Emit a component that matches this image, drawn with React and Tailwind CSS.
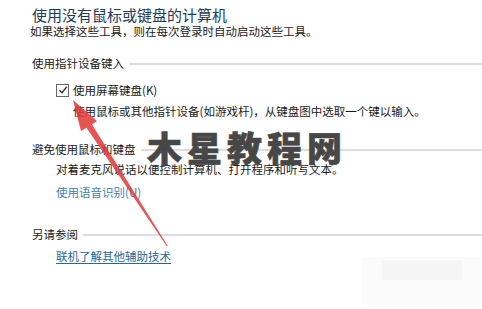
const font = { fontFamily: '"Noto Sans CJK SC", "Noto Sans", sans-serif' };

const SectionHeader = ({ children, className = '' }) => (
  <div className={`flex items-center gap-[5px] text-[11.5px] leading-[14px] text-[#1a1a1a] ${className}`}>
    <span className="shrink-0">{children}</span>
    <div className="mt-[1px] h-[2px] flex-1 bg-[#dddddd]" />
  </div>
);

export default function App() {
  return (
    <div
      className="relative h-[309px] w-[482px] overflow-hidden bg-white pl-[32px] pt-[6px]"
      style={font}
    >
      <h1 className="text-[15px] leading-[18px] text-[#243b57]">使用没有鼠标或键盘的计算机</h1>
      <p className="-ml-[2px] text-[11.5px] leading-[14px] text-[#1a1a1a]">
        如果选择这些工具，则在每次登录时自动启动这些工具。
      </p>

      <SectionHeader className="mt-[18px]">使用指针设备键入</SectionHeader>
      <label className="mt-[13px] flex items-center gap-[4px] pl-[24px] text-[11.5px] leading-[14px] text-[#1a1a1a]">
        <span className="flex h-[13px] w-[13px] items-center justify-center border border-[#666] bg-white">
          <svg width="10" height="10" viewBox="0 0 10 10">
            <path d="M1.5 5.2 L4 7.8 L8.8 1.8" fill="none" stroke="#333" strokeWidth="1.4" />
          </svg>
        </span>
        使用屏幕键盘(K)
      </label>
      <p className="mt-[7px] pl-[41px] text-[11.5px] leading-[14px] text-[#1a1a1a]">
        使用鼠标或其他指针设备(如游戏杆)，从键盘图中选取一个键以输入。
      </p>

      <SectionHeader className="mt-[24px]">避免使用鼠标和键盘</SectionHeader>
      <p className="mt-[6px] pl-[24px] text-[11.5px] leading-[14px] text-[#1a1a1a]">
        对着麦克风说话以便控制计算机、打开程序和听写文本。
      </p>
      <p className="mt-[9px] pl-[24px] text-[11.5px] leading-[14px] text-[#3f80ad]">使用语音识别(U)</p>

      <SectionHeader className="mt-[28px]">另请参阅</SectionHeader>
      <p className="mt-[8px] pl-[24px] text-[11.5px] leading-[14px]">
        <span className="text-[#2b6897] underline underline-offset-2">联机了解其他辅助技术</span>
      </p>

      {/* watermark */}
      <div className="absolute left-[147px] top-[127px] text-[35px] font-black leading-[40px] tracking-[5px] text-[#474747] [-webkit-text-stroke:0.6px_#474747]">
        木星教程网
      </div>
      <div className="absolute left-[362px] top-[257px] h-[48px] w-[118px] bg-[#fbfbfb]">
        <div className="ml-[20px] mt-[3px] h-[20px] w-[80px] bg-[#f5f5f5]" />
      </div>

      {/* red arrow */}
      <svg className="absolute left-0 top-0" width="482" height="309" viewBox="0 0 482 309">
        <polygon
          points="73,100 97,121 92,124.5 167.8,246 166.6,246 86.5,127.7 81,131"
          fill="#e23c3c"
          fillOpacity="0.88"
        />
      </svg>
    </div>
  );
}
